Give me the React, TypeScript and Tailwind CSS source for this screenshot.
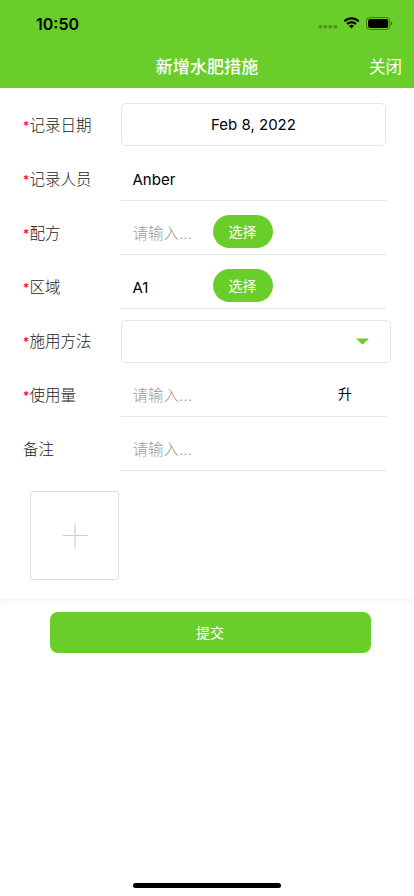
import type { ReactNode } from 'react';

function Row({ label, required = true, children }: { label: string; required?: boolean; children: ReactNode }) {
    return (
        <div className="flex h-[54px] pl-[23px] pt-[6px]">
            <div className="flex h-[43px] w-[98px] shrink-0 items-center pt-px text-[15.5px] font-light text-[#222]">
                {required && <span className="w-[6.5px] pb-px text-[12px] font-medium text-[#f00]">*</span>}
                <span>{label}</span>
            </div>
            {children}
        </div>
    );
}

function Line({ children }: { children: ReactNode }) {
    return (
        <div className="flex h-[43px] w-[265px] items-center border-b border-[#e6e6e6] pl-[11.5px] text-[15px]">
            {children}
        </div>
    );
}

function Placeholder() {
    return <span className="w-[80px] pt-[2px] text-[15.5px] font-light text-[#999]">请输入...</span>;
}

function PickButton() {
    return (
        <button className="-mt-[3px] h-[33px] w-[60px] rounded-full bg-[#6ace2a] pb-px text-[14px] text-white">
            选择
        </button>
    );
}

function StatusBar() {
    return (
        <div className="flex h-[44px] items-center pl-[36px] pr-[21px] pt-[2px]">
            <span className="pt-px text-[16px] font-semibold">10:50</span>
            <div className="ml-auto flex items-center">
                <svg className="mt-[7px]" width="20" height="4" viewBox="0 0 20 4" fill="#000" fillOpacity="0.27">
                    <rect x="0.5" y="0" width="3.6" height="3.6" rx="1" />
                    <rect x="5.5" y="0" width="3.6" height="3.6" rx="1" />
                    <rect x="10.5" y="0" width="3.6" height="3.6" rx="1" />
                    <rect x="15.5" y="0" width="3.6" height="3.6" rx="1" />
                </svg>
                <svg className="ml-[5px]" width="17" height="12" viewBox="0 0 17 12">
                    <path
                        fill="#000"
                        d="M8.5 2.5c2.3 0 4.5.9 6.2 2.5.1.1.3.1.4 0l1.2-1.2c.1-.1.1-.3 0-.4C12-.8 5-.8.7 3.4c-.1.1-.1.3 0 .4L1.9 5c.1.1.3.1.4 0C4 3.4 6.2 2.5 8.5 2.5zM8.5 6.4c1.3 0 2.5.5 3.4 1.3.1.1.3.1.4 0l1.2-1.2c.1-.1.1-.3 0-.4-2.8-2.6-7.2-2.6-10 0-.1.1-.1.3 0 .4l1.2 1.2c.1.1.3.1.4 0 .9-.8 2.1-1.3 3.4-1.3zM10.9 9.1c.1-.1.1-.3 0-.4-1.4-1.2-3.4-1.2-4.8 0-.1.1-.1.3 0 .4l2.2 2.2c.1.1.3.1.4 0z"
                    />
                </svg>
                <svg className="ml-[6px]" width="27" height="13" viewBox="0 0 27 13">
                    <rect x="0.5" y="0.5" width="23.3" height="12" rx="3.5" fill="none" stroke="#000" strokeOpacity="0.4" />
                    <rect x="2.1" y="2.1" width="20.1" height="8.8" rx="2" fill="#000" />
                    <path d="M24.9 4.5v4c.8-.3 1.4-1.1 1.4-2s-.6-1.7-1.4-2z" fill="#000" fillOpacity="0.45" />
                </svg>
            </div>
        </div>
    );
}

export default function App() {
    return (
        <div className="flex h-[896px] w-[414px] flex-col bg-white font-[Inter,'Noto_Sans_CJK_SC',sans-serif] text-black">
            <header className="h-[88px] shrink-0 bg-[#6ace2a]">
                <StatusBar />
                <div className="grid h-[44px] grid-cols-[1fr_auto_1fr] items-center pt-[2px] text-[17px] text-white">
                    <h1 className="col-start-2 pt-px font-medium tracking-[0.1px]">新增水肥措施</h1>
                    <button className="mr-[12px] justify-self-end text-[16.5px]">关闭</button>
                </div>
            </header>

            <main className="h-[511px] shrink-0 pt-[10px] shadow-[0_2px_6px_rgba(0,0,0,0.06)]">
                <Row label="记录日期">
                    <div className="-mt-px flex h-[43px] w-[265px] items-center justify-center rounded-[5px] border border-[#e6e6e6] pt-[2px] text-[15px]">
                        Feb 8, 2022
                    </div>
                </Row>
                <Row label="记录人员">
                    <Line>
                        <span className="pt-[2px]">Anber</span>
                    </Line>
                </Row>
                <Row label="配方">
                    <Line>
                        <Placeholder />
                        <PickButton />
                    </Line>
                </Row>
                <Row label="区域">
                    <Line>
                        <span className="w-[80px] pt-[2px]">A1</span>
                        <PickButton />
                    </Line>
                </Row>
                <Row label="施用方法">
                    <div className="flex h-[43px] w-[270px] items-center justify-end rounded-[5px] border border-[#e6e6e6] pr-[21px]">
                        <svg width="13" height="7" viewBox="0 0 13 7">
                            <path d="M0 0.5h13L6.5 6.7z" fill="#6ace2a" />
                        </svg>
                    </div>
                </Row>
                <Row label="使用量">
                    <Line>
                        <Placeholder />
                        <span className="-mt-[3px] ml-auto mr-[34px] text-[14px]">升</span>
                    </Line>
                </Row>
                <Row label="备注" required={false}>
                    <Line>
                        <Placeholder />
                    </Line>
                </Row>
                <div className="ml-[30px] mt-[15px] flex h-[89px] w-[89px] items-center justify-center rounded-[3px] border border-[#dedede]">
                    <svg width="26" height="26" viewBox="0 0 26 26">
                        <path d="M0.5 12.5h25" stroke="#ccc" />
                        <path d="M13 0.5v25" stroke="#d9d9d9" strokeWidth="1.5" />
                    </svg>
                </div>
            </main>

            <button className="ml-[50px] mt-[13px] h-[41px] w-[321px] shrink-0 rounded-[8px] bg-[#6ace2a] pr-px text-[14px] text-white">
                提交
            </button>

            <div className="mx-auto mb-[8px] mt-auto h-[5px] w-[148px] rounded-full bg-black" />
        </div>
    );
}
